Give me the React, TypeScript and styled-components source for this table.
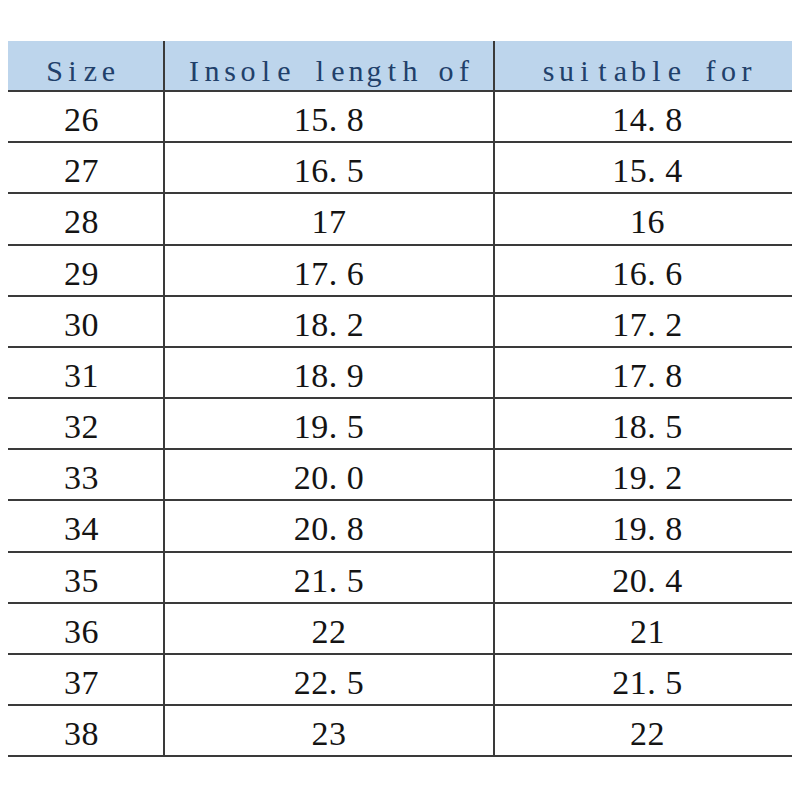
import React from "react";
import styled from "styled-components";

const Page = styled.div<{ $f: string }>`
  font-family: ${(p) => p.$f};
  width: 800px;
  height: 800px;
  margin: -8px 0 0 -8px;
  padding-top: 41px;
  box-sizing: border-box;
  overflow: hidden;
  background: #ffffff;
`;

const Table = styled.div`
  display: grid;
  grid-template-columns: 163px 330px 307px;
  grid-auto-rows: 51.17px;
  width: 800px;
`;

const Cell = styled.div<{ $head?: boolean; $first?: boolean; $f: string }>`
  font-family: ${(p) => p.$f};
  font-size: ${(p) => (p.$head ? "30px" : "34px")};
  box-sizing: border-box;
  text-align: center;
  line-height: ${(p) => (p.$head ? "30px" : "34px")};
  border-bottom: 2px solid #3a3a3a;
  border-left: ${(p) => (p.$first ? "none" : "2px solid #3a3a3a")};
  background: ${(p) => (p.$head ? "#bdd5ec" : "#ffffff")};
  color: ${(p) => (p.$head ? "#21406a" : "#141414")};
  padding-top: ${(p) => (p.$head ? "15px" : "11px")};
  letter-spacing: ${(p) => (p.$head ? "0px" : "0.5px")};
`;

const Ch = styled.span<{ $w: number }>`
  display: inline-block;
  width: ${(p) => p.$w}px;
  text-align: center;
  white-space: pre;
`;

const Dot = styled.span`
  margin-right: 9px;
`;

const Mono = ({ text, w }: { text: string; w: number }) => (
  <>
    {text.split("").map((c, i) => (
      <Ch key={i} $w={w}>
        {c}
      </Ch>
    ))}
  </>
);

const Num = ({ v }: { v: string }) => {
  const [a, b] = v.split(".");
  if (b === undefined) return <>{a}</>;
  return (
    <>
      {a}
      <Dot>.</Dot>
      {b}
    </>
  );
};

const rows: [string, string, string][] = [
  ["26", "15.8", "14.8"],
  ["27", "16.5", "15.4"],
  ["28", "17", "16"],
  ["29", "17.6", "16.6"],
  ["30", "18.2", "17.2"],
  ["31", "18.9", "17.8"],
  ["32", "19.5", "18.5"],
  ["33", "20.0", "19.2"],
  ["34", "20.8", "19.8"],
  ["35", "21.5", "20.4"],
  ["36", "22", "21"],
  ["37", "22.5", "21.5"],
  ["38", "23", "22"],
];

const headers = ["Size", "Insole length of", "suitable for"];
const SERIF = '"Liberation Serif"';

export default function App() {
  return (
    <Page $f={SERIF}>
      <Table>
        {headers.map((h, i) => (
          <Cell key={h} $head $first={i === 0} $f={SERIF}>
            <Mono text={h} w={18} />
          </Cell>
        ))}
        {rows.map((r) =>
          r.map((v, i) => (
            <Cell key={r[0] + "-" + i} $first={i === 0} $f={SERIF}>
              <Num v={v} />
            </Cell>
          ))
        )}
      </Table>
    </Page>
  );
}
